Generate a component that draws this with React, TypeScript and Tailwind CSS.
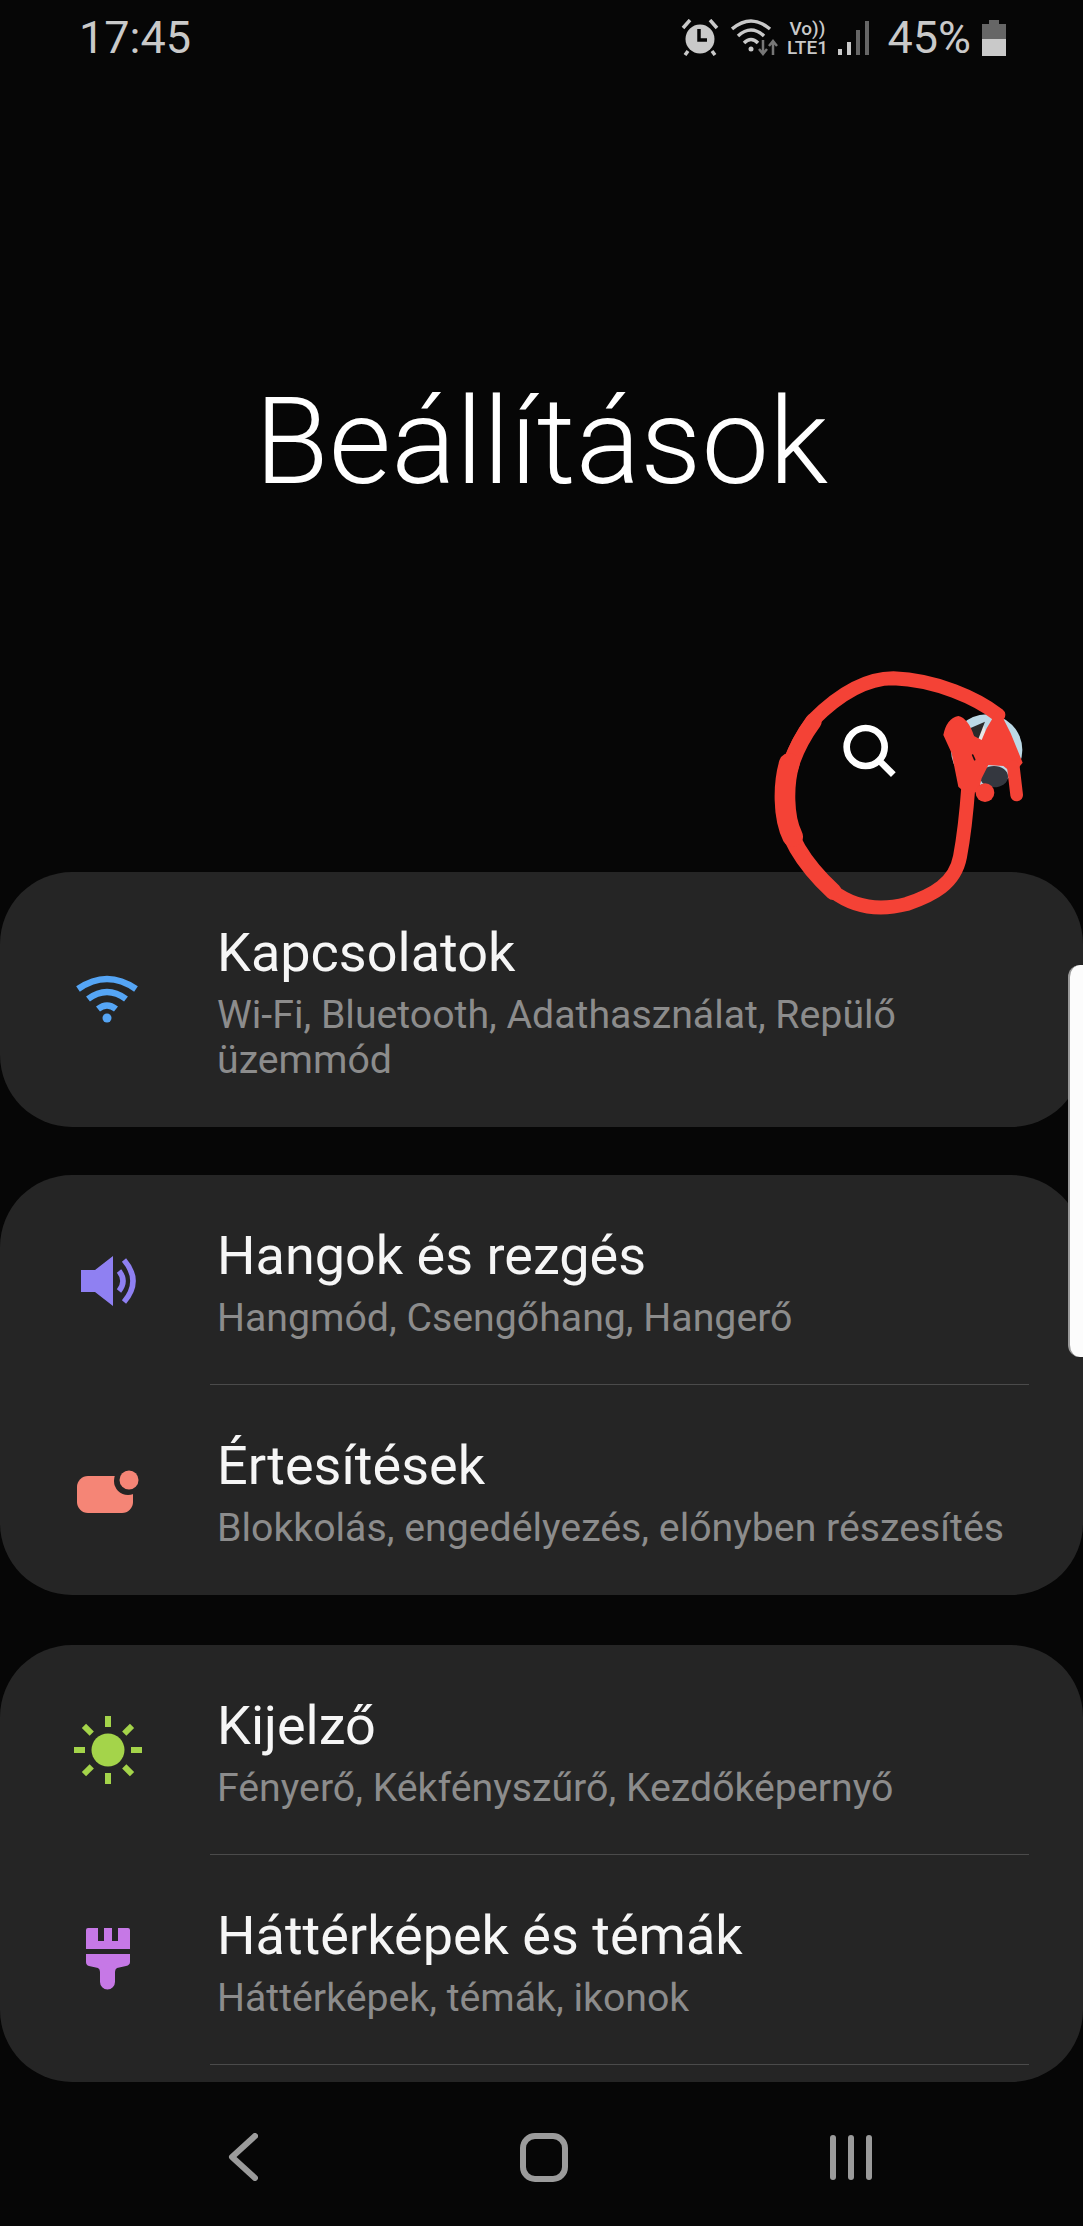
const font = { fontFamily: "Roboto, sans-serif" };

function Row({ icon, title, sub, divider }: { icon: React.ReactNode; title: string; sub: React.ReactNode; divider?: boolean }) {
  return (
    <div className="relative flex">
      <div className="flex w-[217px] shrink-0 items-center justify-center pr-[1px]">{icon}</div>
      <div className="flex-1 pt-[46px] pb-[44px]">
        <div className="text-[54px] leading-[70px] text-[#f6f6f6]">{title}</div>
        <div className="mt-[5px] text-[39.250px] leading-[45px] whitespace-nowrap text-[#8c8c8c]">{sub}</div>
      </div>
      {divider && <div className="absolute bottom-0 left-[210px] right-[54px] h-[1px] bg-[#4b4b4b]" />}
    </div>
  );
}

const Wifi = () => (
  <svg width="66" height="50" viewBox="0 0 66 50" fill="none" stroke="#55a5f5" strokeWidth="6.5" className="-ml-[2px]">
    <path d="M4 14 Q33 -6 62 14" />
    <path d="M14 24 Q33 10 52 24" />
    <path d="M24 34 Q33 27 42 34" />
    <circle cx="33" cy="43" r="4.5" fill="#55a5f5" stroke="none" />
  </svg>
);
const Speaker = () => (
  <svg width="58" height="52" viewBox="0 0 58 52" className="ml-[1px] mt-[1px]">
    <path d="M1 15h14L33 1v50L15 37H1z" fill="#8f80f2" />
    <path d="M39 16Q47 26 39 36" fill="none" stroke="#8f80f2" strokeWidth="5.5" />
    <path d="M44 5Q62 26 44 47" fill="none" stroke="#8f80f2" strokeWidth="5.5" />
  </svg>
);
const Notif = () => (
  <svg width="64" height="44" viewBox="0 0 64 44" className="mt-[4px]">
    <rect x="1" y="6" width="56" height="37" rx="11" fill="#f58576" />
    <circle cx="52" cy="11" r="14" fill="#252525" />
    <circle cx="53" cy="10" r="9.5" fill="#f58576" />
  </svg>
);
const Sun = () => (
  <svg width="70" height="70" viewBox="0 0 70 70" fill="#a4d44a">
    <circle cx="35" cy="35" r="16.5" />
    <rect x="32" y="1" width="6" height="11" />
    <rect x="32" y="58" width="6" height="11" />
    <rect x="1" y="32" width="11" height="6" />
    <rect x="58" y="32" width="11" height="6" />
    <rect x="32" y="1" width="6" height="11" transform="rotate(45 35 35)" />
    <rect x="32" y="1" width="6" height="11" transform="rotate(135 35 35)" />
    <rect x="32" y="1" width="6" height="11" transform="rotate(225 35 35)" />
    <rect x="32" y="1" width="6" height="11" transform="rotate(315 35 35)" />
  </svg>
);
const Brush = () => (
  <svg width="44" height="62" viewBox="0 0 44 62" fill="#c678e6" className="mt-[-2px]">
    <path d="M2 0h10v13h6V0h8v13h6V0h10a2 2 0 0 1 2 2v19H0V2a2 2 0 0 1 2-2z" />
    <path d="M0 26h44v8q0 3-4 4l-9 2q-2 1-2 4v10a7.500 7.500 0 0 1-15 0V44q0-3-2-4l-9-2q-3-1-3-4z" />
  </svg>
);

function StatusIcons() {
  return (
    <div className="flex items-center text-[#c9c9c9]">
      <svg width="38" height="37" viewBox="0 0 38 37" className="mr-[12px]">
        <circle cx="19" cy="20" r="14.500" fill="#c9c9c9" />
        <path d="M18 10v11h8" fill="none" stroke="#060606" strokeWidth="3.500" />
        <path d="M9 1 2 9M29 1l7 8M7 32l-3 4M31 32l3 4" stroke="#c9c9c9" strokeWidth="3.500" />
      </svg>
      <svg width="48" height="38" viewBox="0 0 48 38" fill="none" className="mr-[5px]">
        <g stroke="#c9c9c9" strokeWidth="3.500">
          <path d="M1 10Q20 -6 39 10" />
          <path d="M7 17Q20 5 33 17" />
          <path d="M13 24Q20 17 27 24" />
        </g>
        <circle cx="20" cy="30" r="2.500" fill="#c9c9c9" />
        <path d="M32 21v13M28 30l4 5 4-5M42 36V23M38 27l4-5 4 5" stroke="#777" strokeWidth="2.500" />
      </svg>
      <div className="mr-[8px] flex w-[46px] flex-col items-center text-[19px] font-medium leading-[19px]">
        <span>Vo))</span>
        <span>LTE1</span>
      </div>
      <svg width="32" height="34" viewBox="0 0 32 34" className="mr-[17px]">
        <rect x="0" y="28" width="4" height="6" fill="#c9c9c9" />
        <rect x="9" y="21" width="4" height="13" fill="#c9c9c9" />
        <rect x="18" y="9" width="4" height="25" fill="#666" />
        <rect x="27" y="0" width="4" height="34" fill="#666" />
      </svg>
      <span className="mr-[11px] text-[45px] leading-[44px]">45%</span>
      <svg width="24" height="36" viewBox="0 0 24 36">
        <path d="M7 0h10v4h7v15H0V4h7z" fill="#666" />
        <rect x="0" y="19" width="24" height="17" fill="#c9c9c9" />
      </svg>
    </div>
  );
}

function Scribble() {
  return (
    <svg className="absolute left-[750px] top-[650px]" width="333" height="280" viewBox="0 0 999 840" fill="none" strokeLinecap="round" strokeLinejoin="round">
      <circle cx="347" cy="291" r="57" stroke="#fff" strokeWidth="20" />
      <path d="M392 336l38 38" stroke="#fff" strokeWidth="20" strokeLinecap="butt" />
      <circle cx="710" cy="300" r="107" fill="#bcd9e6" />
      <path d="M655 260 L700 220 L720 300 L640 310 Z" fill="#e6e6e6" />
      <path d="M660 235 L705 215 L680 280 Z" fill="#2a2a2a" />
      <ellipse cx="732" cy="380" rx="42" ry="32" fill="#34373f" />
      <path d="M745 195C680 145 560 90 430 85 340 85 260 140 190 210 130 290 100 370 100 470 105 560 170 650 250 725 310 770 380 785 470 762 550 735 615 700 630 620 645 540 650 480 655 410" stroke="#f44236" strokeWidth="42" />
      <path d="M190 215C135 290 102 370 102 470 107 560 170 650 250 725" stroke="#f44236" strokeWidth="50" />
      <path d="M118 340C100 400 98 500 128 560" stroke="#f44236" strokeWidth="62" />
      <path d="M580 255 Q590 205 625 198 Q655 205 672 258 L695 270 L710 235 L745 176 L782 250 L818 338 L790 372 L760 348 L715 345 L695 385 L685 425 L650 432 L625 410 L605 310 Z" fill="#f44236" />
      <path d="M790 350 800 435" stroke="#f44236" strokeWidth="38" />
      <circle cx="705" cy="428" r="28" fill="#f44236" />
      <path d="M668 315 l6 14" stroke="#111" strokeWidth="5" />
    </svg>
  );
}

export default function App() {
  return (
    <div className="relative flex h-[2226px] w-[1083px] flex-col overflow-hidden bg-[#060606]" style={font}>
      <div className="flex h-[75px] items-center justify-between pl-[79px] pr-[77px]">
        <span className="text-[45px] leading-[44px] text-[#c9c9c9]">17:45</span>
        <StatusIcons />
      </div>
      <div className="mt-[297px] text-center text-[120.600px] font-light leading-[140px] text-white">Beállítások</div>
      <div className="h-[360px]" />
      <div className="flex flex-1 flex-col gap-[48px]">
        <div className="overflow-hidden rounded-[72px] bg-[#252525]">
          <Row icon={<Wifi />} title="Kapcsolatok" sub={<>Wi-Fi, Bluetooth, Adathasználat, Repülő<br />üzemmód</>} />
        </div>
        <div className="overflow-hidden rounded-[72px] bg-[#252525]">
          <Row icon={<Speaker />} title="Hangok és rezgés" sub="Hangmód, Csengőhang, Hangerő" divider />
          <Row icon={<Notif />} title="Értesítések" sub="Blokkolás, engedélyezés, előnyben részesítés" />
        </div>
        <div className="mt-[2px] h-[437px] overflow-hidden rounded-[72px] bg-[#252525]">
          <Row icon={<Sun />} title="Kijelző" sub="Fényerő, Kékfényszűrő, Kezdőképernyő" divider />
          <Row icon={<Brush />} title="Háttérképek és témák" sub="Háttérképek, témák, ikonok" divider />
        </div>
      </div>
      <div className="relative flex h-[144px] shrink-0 items-center justify-between pt-[6px] pl-[228px] pr-[211px]">
        <svg width="30" height="48" viewBox="0 0 30 48" fill="none" stroke="#9b9b9b" strokeWidth="6" strokeLinecap="round" strokeLinejoin="round">
          <path d="M27 3 4 24l23 21" />
        </svg>
        <div className="h-[49px] w-[48px] rounded-[15px] border-[6px] border-[#9b9b9b]" />
        <div className="flex gap-[12px]">
          <div className="h-[45px] w-[6px] rounded-full bg-[#9b9b9b]" />
          <div className="h-[45px] w-[6px] rounded-full bg-[#9b9b9b]" />
          <div className="h-[45px] w-[6px] rounded-full bg-[#9b9b9b]" />
        </div>
      </div>
      <div className="absolute left-[1068px] top-[965px] h-[392px] w-[30px] rounded-l-[12px] border-l-2 border-[#999] bg-[#fcfcfc]" />
      <Scribble />
    </div>
  );
}
